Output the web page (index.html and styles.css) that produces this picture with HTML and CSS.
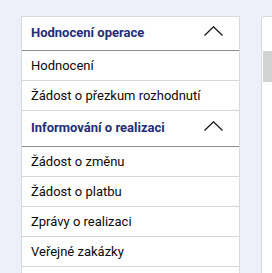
FILE: index.html
```html
<!DOCTYPE html>
<html lang="cs">
<head>
<meta charset="utf-8">
<link rel="stylesheet" href="styles.css">
</head>
<body>
<div class="layout">
  <nav class="menu">
    <div class="group-head">
      <span>Hodnocení operace</span>
      <svg class="chev" width="19" height="10" viewBox="0 0 19 10"><path d="M0.5 9.5 L9.5 0.8 L18.5 9.5" fill="none" stroke="#111" stroke-width="1.2"/></svg>
    </div>
    <div class="item">Hodnocení</div>
    <div class="item">Žádost o přezkum rozhodnutí</div>
    <div class="group-head tall">
      <span>Informování o realizaci</span>
      <svg class="chev" width="19" height="10" viewBox="0 0 19 10"><path d="M0.5 9.5 L9.5 0.8 L18.5 9.5" fill="none" stroke="#111" stroke-width="1.2"/></svg>
    </div>
    <div class="item">Žádost o změnu</div>
    <div class="item">Žádost o platbu</div>
    <div class="item">Zprávy o realizaci</div>
    <div class="item">Veřejné zakázky</div>
    <div class="item"></div>
  </nav>
  <div class="panel">
    <div class="panel-bar"></div>
  </div>
</div>
</body>
</html>
```
FILE: styles.css
```css
html, body {
  margin: 0;
  padding: 0;
  background: #eef0f9;
  overflow: hidden;
}
body {
  font-family: Roboto, "Liberation Sans", sans-serif;
  font-size: 13px;
  color: #0a0a0a;
}
.layout {
  display: flex;
  gap: 21px;
  padding: 16px 0 0 21px;
  align-items: flex-start;
}
.menu {
  flex: 0 0 219px;
  background: #fff;
  border: 1px solid #d8dae2;
  border-bottom: none;
  box-sizing: border-box;
}
.group-head {
  display: flex;
  align-items: center;
  justify-content: space-between;
  padding: 0 16px 3px 9px;
  box-sizing: border-box;
  height: 34px;
  border-bottom: 1px solid #8c8c8c;
  color: #222e78;
  font-weight: bold;
}
.group-head.tall {
  height: 36px;
}
.chev {
  display: block;
  margin-top: -2px;
}
.item {
  height: 29px;
  line-height: 29px;
  padding: 0 9px;
  border-bottom: 1px solid #d6d6d6;
  white-space: nowrap;
}
.panel {
  flex: 1 0 40px;
  height: 300px;
  background: #fff;
  border: 1px solid #d8dae2;
  border-radius: 3px 0 0 0;
  padding: 34px 0 0 1px;
  box-sizing: border-box;
}
.panel-bar {
  height: 31px;
  background: #d2d2d2;
}
```
